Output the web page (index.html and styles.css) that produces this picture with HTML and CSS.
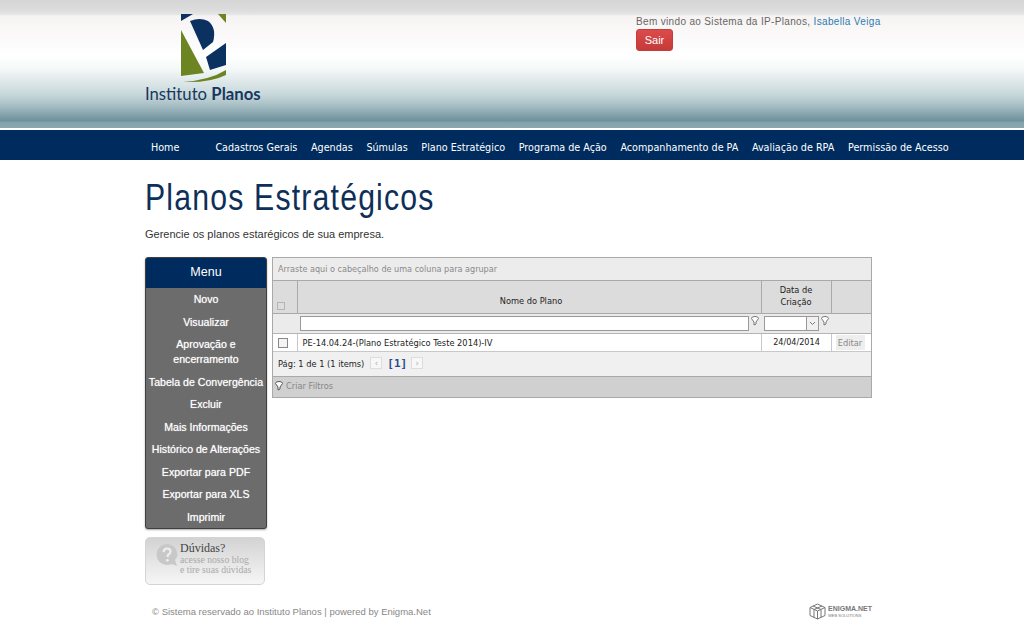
FILE: index.html
```html
<!DOCTYPE html>
<html lang="pt-BR">
<head>
<meta charset="utf-8">
<title>Planos Estratégicos</title>
<link rel="stylesheet" href="styles.css">
</head>
<body>
<header class="top">
  <div class="wrap top-inner">
    <a class="logo" href="#">
      <svg class="logo-mark" width="46" height="70" viewBox="0 0 46 70">
        <polygon points="1,0 13,0 1,7" fill="#0b3161"/>
        <polygon points="38,0 46,0 46,9" fill="#6d8422"/>
        <path d="M10,7 Q20,3 28,7 Q37,14 33,28 L23,36 Z" fill="#0b3161"/>
        <polygon points="1,16 24,59 1,62" fill="#6d8422"/>
        <polygon points="26,43 46,29 46,51 30,56" fill="#0b3161"/>
        <path d="M3,68 Q30,66 46,56 L46,61 Q30,69 3,68 Z" fill="#6d8422"/>
      </svg>
      <span class="logo-text">Instituto <b>Planos</b></span>
    </a>
    <div class="welcome">
      <p class="welcome-line">Bem vindo ao Sistema da IP-Planos, <a href="#">Isabella Veiga</a></p>
      <a class="btn-exit" href="#">Sair</a>
    </div>
  </div>
</header>
<nav class="nav">
  <div class="wrap nav-inner">
    <a class="home" href="#">Home</a>
    <a href="#">Cadastros Gerais</a>
    <a href="#">Agendas</a>
    <a href="#">Súmulas</a>
    <a href="#">Plano Estratégico</a>
    <a href="#">Programa de Ação</a>
    <a href="#">Acompanhamento de PA</a>
    <a href="#">Avaliação de RPA</a>
    <a href="#">Permissão de Acesso</a>
  </div>
</nav>
<main class="wrap main">
  <h1 class="title">Planos Estratégicos</h1>
  <p class="subtitle">Gerencie os planos estarégicos de sua empresa.</p>
  <div class="columns">
    <aside class="side">
      <div class="menu">
        <div class="menu-head">Menu</div>
        <ul class="menu-list">
          <li><a href="#">Novo</a></li>
          <li><a href="#">Visualizar</a></li>
          <li><a href="#">Aprovação e<br>encerramento</a></li>
          <li><a href="#">Tabela de Convergência</a></li>
          <li><a href="#">Excluir</a></li>
          <li><a href="#">Mais Informações</a></li>
          <li><a href="#">Histórico de Alterações</a></li>
          <li><a href="#">Exportar para PDF</a></li>
          <li><a href="#">Exportar para XLS</a></li>
          <li><a href="#">Imprimir</a></li>
        </ul>
      </div>
      <a class="help" href="#">
        <svg class="help-icon" width="24" height="24" viewBox="0 0 24 24">
          <path d="M12,1 A10.5,10.5 0 1 0 12,22 Q15,22 17,21 L22,23 L20,17 Q22.5,14.5 22.5,11.5 A10.5,10.5 0 0 0 12,1 Z" fill="#c8c8c8"/>
          <path d="M8.5,9 Q9,5.5 12,5.5 Q15.5,5.5 15.5,8.5 Q15.5,10.5 13,12 L12.5,14" fill="none" stroke="#eee" stroke-width="2.2"/>
          <circle cx="12.4" cy="17.3" r="1.4" fill="#eee"/>
        </svg>
        <span class="help-text">
          <strong>Dúvidas?</strong>
          <small>acesse nosso blog<br>e tire suas dúvidas</small>
        </span>
      </a>
    </aside>
    <section class="grid">
      <div class="group-panel">Arraste aqui o cabeçalho de uma coluna para agrupar</div>
      <table class="grid-table">
        <colgroup><col class="c-check"><col class="c-name"><col class="c-date"><col class="c-edit"></colgroup>
        <tr class="row-head">
          <th class="head-check"><span class="check check-faint"></span></th>
          <th class="head-name">Nome do Plano</th>
          <th class="head-date">Data de<br>Criação</th>
          <th></th>
        </tr>
        <tr class="row-filter">
          <td></td>
          <td><div class="filter-cell"><span class="input grow"></span><svg class="funnel" width="8" height="10" viewBox="0 0 8 10"><path d="M0.5,2.5 A3.5,2 0 0 1 7.5,2.5 L5,6 V8 L3,9 V6 Z" fill="#fff" stroke="#777"/></svg></div></td>
          <td><div class="filter-cell"><span class="input grow combo"><span class="combo-btn"><svg width="7" height="5" viewBox="0 0 7 5"><path d="M1,1 L3.5,3.5 L6,1" fill="none" stroke="#777"/></svg></span></span><svg class="funnel" width="8" height="10" viewBox="0 0 8 10"><path d="M0.5,2.5 A3.5,2 0 0 1 7.5,2.5 L5,6 V8 L3,9 V6 Z" fill="#fff" stroke="#777"/></svg></div></td>
          <td></td>
        </tr>
        <tr class="row-data">
          <td class="cell-check"><span class="check"></span></td>
          <td class="cell-name">PE-14.04.24-(Plano Estratégico Teste 2014)-IV</td>
          <td class="cell-date">24/04/2014</td>
          <td class="cell-edit"><a class="edit" href="#">Editar</a></td>
        </tr>
      </table>
      <div class="pager">
        <span>Pág: 1 de 1 (1 items)</span>
        <span class="page-btn">‹</span>
        <b class="page-current">[1]</b>
        <span class="page-btn">›</span>
      </div>
      <div class="filter-bar">
        <svg class="funnel" width="8" height="10" viewBox="0 0 8 10"><path d="M0.5,2.5 A3.5,2 0 0 1 7.5,2.5 L5,6 V8 L3,9 V6 Z" fill="#fff" stroke="#555"/></svg>
        <span>Criar Filtros</span>
      </div>
    </section>
  </div>
  <footer class="foot">
    <span class="foot-text">© Sistema reservado ao Instituto Planos | powered by Enigma.Net</span>
    <span class="enigma">
      <svg width="17" height="17" viewBox="0 0 17 17"><path d="M8.5,1 L16,4.5 V12.5 L8.5,16 L1,12.5 V4.5 Z M1,4.5 L8.5,8 L16,4.5 M8.5,8 V16 M4,3 L12,6.5 V14.5 M13,3 L5,6.5 V14.5" fill="none" stroke="#777" stroke-width="1"/></svg>
      <span class="enigma-text"><b>ENIGMA.NET</b><small>WEB SOLUTIONS</small></span>
    </span>
  </footer>
</main>
</body>
</html>
```
FILE: styles.css
```css
* { box-sizing: border-box; }
html, body { margin: 0; padding: 0; }
body { background: #fff; font-family: "Liberation Sans", Arial, sans-serif; color: #333; height: 640px; overflow: hidden; }
a { text-decoration: none; color: inherit; }
.wrap { width: 734px; margin-left: 145px; }

.top { height: 130px; background:
  linear-gradient(to bottom, #d6d6d6 0, #dcdcdc 10px, #e4e4e4 14px, #f7f3f3 16px, #fff 55px, #f6f9f9 68px, #c6d7da 95px, #a9c0c6 105px, #6d909c 121px, #82a2ab 122px, #8aa7af 127px, #8aa7af 128px, #fff 128px, #fff 130px); }
.top-inner { display: flex; height: 130px; }
.logo { width: 491px; display: flex; flex-direction: column; padding-top: 14px; flex: none; }
.logo-mark { margin-left: 35px; display: block; }
.logo-text { font-family: "Lato", sans-serif; font-size: 16.7px; line-height: 20px; color: #17375e; white-space: nowrap; }
.logo-text b { font-weight: 700; }
.welcome { padding-top: 15px; font-size: 10px; color: #666; letter-spacing: 0.34px; }
.welcome-line { margin: 0; line-height: 14px; white-space: nowrap; }
.welcome-line a { color: #2b7cb3; }
.btn-exit { display: block; width: 37px; height: 22px; background: linear-gradient(#dc4b4b, #c53a3a); border-radius: 3px; color: #fff; text-align: center; line-height: 20px; font-size: 11px; letter-spacing: 0; border: 1px solid #c43c3c; }

.nav { height: 30px; background: #002b5e; }
.nav-inner { display: flex; height: 30px; align-items: center; gap: 13.7px; padding-top: 4px; font-family: "DejaVu Sans Condensed", "DejaVu Sans", sans-serif; font-size: 10.7px; color: #fff; white-space: nowrap; }
.nav-inner .home { margin-left: 6px; margin-right: 22.3px; }

.title { margin: 0; padding-top: 16px; font-family: "Liberation Sans", sans-serif; font-weight: 400; font-size: 36px; line-height: 44px; color: #0e2f58; letter-spacing: 1.4px; transform: scaleX(.84); transform-origin: left top; white-space: nowrap; }
.subtitle { margin: 0; padding-top: 7px; font-size: 11px; line-height: 14px; color: #333; }

.columns { display: flex; margin-top: 16px; height: 332px; }
.side { width: 127px; flex: none; }
.menu { width: 122px; height: 272px; background: #6c6c6c; border: 1px solid #3f3f3f; border-radius: 3px; box-shadow: 0 1px 2px rgba(0,0,0,.35); }
.menu-head { height: 30px; background: #002b5e; color: #fff; text-align: center; font-size: 12.5px; line-height: 28px; border-radius: 2px 2px 0 0; }
.menu-list { list-style: none; margin: 0; padding: 0; }
.menu-list a { display: block; text-align: center; color: #fff; font-size: 10.6px; line-height: 15px; padding: 4px 0 3.5px; white-space: nowrap; text-shadow: 0 0 1px rgba(255,255,255,.7); }
.help { display: flex; width: 120px; height: 48px; margin-top: 8px; padding: 3px 0 0 9px; gap: 1px; border: 1px solid #d4d4d4; border-radius: 5px; background: linear-gradient(#d3d3d3, #f6f6f6); }
.help-icon { flex: none; margin-top: 2px; }
.help-text { display: flex; flex-direction: column; font-family: "Liberation Serif", serif; }
.help-text strong { font-weight: 400; font-size: 12px; line-height: 14px; color: #444; }
.help-text small { font-size: 9.7px; line-height: 9.5px; color: #aaa; white-space: nowrap; }

.grid { width: 600px; height: 141px; border: 1px solid #a9a9a9; font-family: "DejaVu Sans Condensed", "DejaVu Sans", sans-serif; font-size: 9.2px; color: #222; display: flex; flex-direction: column; }
.group-panel { height: 23px; line-height: 22px; padding-left: 5px; background: #ececec; border-bottom: 1px solid #a9a9a9; color: #8a8a8a; font-size: 9px; }
.grid-table { width: 598px; border-collapse: collapse; table-layout: fixed; }
.c-check { width: 24px; } .c-name { width: 464px; } .c-date { width: 70px; } .c-edit { width: 40px; }
.grid-table th { font-weight: 400; background: #dcdcdc; border-right: 1px solid #a9a9a9; text-align: center; line-height: 12px; padding: 0; height: 32px; }
.grid-table th:last-child, .grid-table td:last-child { border-right: 0; }
.row-head th { border-bottom: 1px solid #a9a9a9; }
.grid-table .head-name { padding: 8px 0 0 4px; }
.grid-table .head-date { padding-bottom: 2px; }
.head-check { vertical-align: bottom; }
.row-filter td { height: 20px; background: #ebebeb; padding: 0; border-bottom: 1px solid #b5b5b5; vertical-align: top; }
.filter-cell { display: flex; align-items: flex-start; padding: 2px 2px 0 3px; gap: 2px; height: 19px; }
.input { display: block; height: 15px; background: #fff; border: 1px solid #999; position: relative; }
.grow { flex: 1; }
.combo-btn { position: absolute; right: 0; top: 0; bottom: 0; width: 12px; border-left: 1px solid #999; background: #f0f0f0; display: flex; align-items: center; justify-content: center; }
.funnel { flex: none; }
.row-data td { height: 18px; background: #fff; padding: 0; border-right: 1px solid #c8c8c8; border-bottom: 1px solid #c8c8c8; }
.cell-check { text-align: center; }
.check { display: inline-block; width: 10px; height: 10px; background: #f4f4f4; border: 1px solid #888; vertical-align: middle; margin-right: 3px; }
.check-faint { width: 8px; height: 8px; border-color: #b5b5b5; margin-bottom: 3px; background: #ddd; margin-right: 7px; }
.row-data .cell-name { padding-left: 5px; white-space: nowrap; }
.row-data .cell-date { text-align: center; font-size: 9px; padding-left: 1px; }
.edit { display: block; width: 29px; margin-left: 4px; background: #eee; color: #888; text-align: center; line-height: 15px; }
.pager { height: 25px; background: #f0f0f0; border-bottom: 1px solid #a9a9a9; display: flex; align-items: center; padding: 0 0 1px 5px; gap: 6px; }
.page-btn { width: 12px; height: 12px; border: 1px solid #ddd; background: #f7f7f7; color: #aaa; font-size: 9px; line-height: 10px; text-align: center; }
.page-current { font-family: "DejaVu Sans Mono", monospace; font-size: 11px; color: #2b4a8a; margin: 0 -2px 0 -1px; }
.filter-bar { flex: 1; background: #d0d0d0; display: flex; align-items: center; gap: 3px; padding: 0 0 2px 2px; color: #888; }

.foot { display: flex; justify-content: space-between; align-items: center; height: 20px; margin-top: 12px; width: 727px; }
.foot-text { margin-left: 7px; font-size: 9.5px; color: #888; }
.enigma { display: flex; align-items: center; gap: 2px; }
.enigma-text { display: flex; flex-direction: column; color: #777; }
.enigma-text b { font-size: 7px; line-height: 8px; }
.enigma-text small { font-size: 4px; line-height: 5px; }
```
